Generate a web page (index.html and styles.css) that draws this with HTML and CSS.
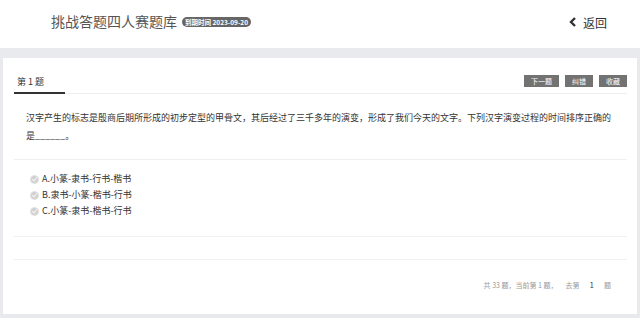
FILE: index.html
```html
<!DOCTYPE html>
<html lang="zh-CN">
<head>
  <meta charset="UTF-8"/>
  <meta name="viewport" content="width=device-width, initial-scale=1.0"/>
  <title>挑战答题四人赛题库</title>
  <link rel="stylesheet" href="styles.css">
</head>
<body>

<header class="top">
  <div class="brand">
    <h1>挑战答题四人赛题库</h1>
    <span class="badge">到期时间 2023-09-20</span>
  </div>
  <a class="back" href="#">
    <svg width="8" height="10" viewBox="0 0 8 10"><path d="M6 1 L2 5 L6 9" fill="none" stroke="#333" stroke-width="2.4"/></svg>
    <span>返回</span>
  </a>
</header>

<main class="card">
  <div class="tabbar">
    <div class="tab">第 1 题</div>
    <div class="actions">
      <button class="btn">下一题</button>
      <button class="btn">纠错</button>
      <button class="btn">收藏</button>
    </div>
  </div>

  <div class="question">
    汉字产生的标志是殷商后期所形成的初步定型的甲骨文，其后经过了三千多年的演变，形成了我们今天的文字。下列汉字演变过程的时间排序正确的是______。
  </div>

  <div class="options">
    <label class="option"><span class="radio"></span>A.小篆-隶书-行书-楷书</label>
    <label class="option"><span class="radio"></span>B.隶书-小篆-楷书-行书</label>
    <label class="option"><span class="radio"></span>C.小篆-隶书-楷书-行书</label>
  </div>

  <div class="spacer"></div>

  <div class="pager">
    <span>共 33 题，当前第 1 题，</span>
    <span class="goto">去第</span>
    <span class="page-num">1</span>
    <span>题</span>
  </div>
</main>

</body>
</html>
```

FILE: styles.css
```css
body {
  margin: 0;
  background: #e9eaed;
  font-family: "Noto Sans CJK SC", "Noto Sans", sans-serif;
  color: #333;
}
.top {
  height: 48px;
  box-sizing: border-box;
  background: #fff;
  display: flex;
  align-items: center;
  justify-content: space-between;
  padding: 0 33px 6px 51px;
}
.brand {
  display: flex;
  align-items: center;
}
h1 {
  margin: 0;
  font-size: 14px;
  font-weight: normal;
  color: #555;
  line-height: 16px;
}
.badge {
  margin-left: 5px;
  margin-top: 1px;
  background: #666;
  color: #fff;
  font-size: 6.5px;
  font-weight: bold;
  line-height: 10px;
  padding: 0 3px;
  border-radius: 5px;
}
.back {
  display: flex;
  align-items: center;
  gap: 6px;
  color: #333;
  text-decoration: none;
  font-size: 12px;
  margin-top: 2px;
}
.card {
  margin: 10px 3px 0;
  height: 256px;
  background: #fff;
  padding: 0 10px 0 11px;
}
.tabbar {
  display: flex;
  justify-content: space-between;
  align-items: flex-start;
  padding-top: 17px;
  border-bottom: 1px solid #eee;
}
.tab {
  width: 48px;
  padding: 1px 0 4px 3px;
  font-size: 9px;
  line-height: 12px;
  border-bottom: 2px solid #333;
  margin-bottom: -1px;
}
.actions {
  display: flex;
  gap: 6px;
}
.btn {
  border: none;
  background: #727272;
  color: #fff;
  font-family: inherit;
  font-size: 7px;
  line-height: 12px;
  height: 12px;
  padding: 0 7px;
}
.question {
  padding: 15px 12px 14px;
  font-size: 9px;
  line-height: 18px;
  border-bottom: 1px solid #f0f0f0;
}
.options {
  padding: 11px 16px 17px;
  border-bottom: 1px solid #f0f0f0;
}
.option {
  display: flex;
  align-items: center;
  gap: 3px;
  font-size: 9px;
  line-height: 16px;
}
.radio {
  width: 9px;
  height: 9px;
  border-radius: 50%;
  background: #d0d0d0;
  border: 1px solid #e2e2e2;
  box-sizing: border-box;
  position: relative;
}
.radio::after {
  content: "";
  position: absolute;
  left: 2px;
  top: 0.5px;
  width: 2px;
  height: 4px;
  border: solid #f4f4f4;
  border-width: 0 1px 1px 0;
  transform: rotate(40deg);
}
.spacer {
  height: 22px;
  border-bottom: 1px solid #f0f0f0;
}
.pager {
  display: flex;
  justify-content: flex-end;
  align-items: center;
  padding: 19px 16px 0 0;
  font-size: 7px;
  line-height: 12px;
  color: #999;
}
.goto {
  margin-left: 8px;
}
.page-num {
  color: #444;
  font-size: 8px;
  margin: 0 10px;
}
```
